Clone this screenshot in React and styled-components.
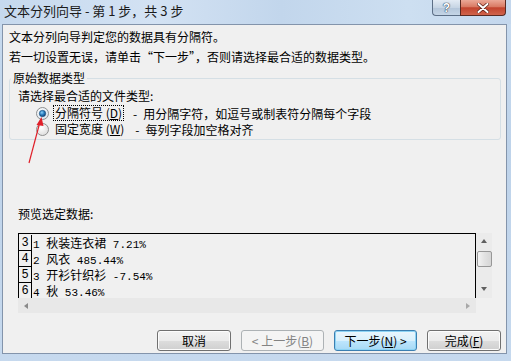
import React from 'react';
import styled, { createGlobalStyle } from 'styled-components';

const GlobalStyle = createGlobalStyle`
  html, body {
    margin: 0;
    padding: 0;
  }
  body {
    width: 511px;
    height: 361px;
    overflow: hidden;
    font-family: "Noto Sans CJK SC", "Liberation Sans", sans-serif;
    font-size: 12px;
    color: #000;
  }
`;

const rows = [
  { no: 3, idx: '1', name: '秋装连衣裙', pct: '7.21%' },
  { no: 4, idx: '2', name: '风衣', pct: '485.44%' },
  { no: 5, idx: '3', name: '开衫针织衫', pct: '-7.54%' },
  { no: 6, idx: '4', name: '秋', pct: '53.46%' },
];

const RadioIcon = ({ checked }) => (
  <svg width="13" height="13" viewBox="0 0 13 13">
    <defs>
      <radialGradient id={checked ? 'rgOn' : 'rgOff'} cx="0.4" cy="0.35" r="0.7">
        <stop offset="0" stopColor="#ffffff" />
        <stop offset="1" stopColor={checked ? '#d9e4ee' : '#dcdcdc'} />
      </radialGradient>
      <radialGradient id="dot" cx="0.4" cy="0.35" r="0.7">
        <stop offset="0" stopColor="#8fd0f7" />
        <stop offset="0.5" stopColor="#2a7fc0" />
        <stop offset="1" stopColor="#0b3c6e" />
      </radialGradient>
    </defs>
    <circle cx="6.5" cy="6.5" r="6" fill={`url(#${checked ? 'rgOn' : 'rgOff'})`} stroke="#8e8f8f" />
    {checked && <circle cx="6.5" cy="6.5" r="3.2" fill="url(#dot)" stroke="#1d4f7c" strokeWidth="0.6" />}
  </svg>
);

const App = () => (
  <>
    <GlobalStyle />
    <Window>
      <TitleBar>
        <Title>文本分列向导 - 第 1 步，共 3 步</Title>
        <Controls>
          <HelpBtn>?</HelpBtn>
          <CloseBtn>
            <svg width="12" height="10" viewBox="0 0 12 10">
              <path d="M1.5 1 L10.5 9 M10.5 1 L1.5 9" stroke="#5a1e16" strokeWidth="3.4" strokeLinecap="round" />
              <path d="M1.5 1 L10.5 9 M10.5 1 L1.5 9" stroke="#fff" strokeWidth="2" strokeLinecap="round" />
            </svg>
          </CloseBtn>
        </Controls>
      </TitleBar>

      <Client>
        <Intro>
          <p>文本分列向导判定您的数据具有分隔符。</p>
          <p>若一切设置无误，请单击“下一步”，否则请选择最合适的数据类型。</p>
        </Intro>

        <Group>
          <legend>原始数据类型</legend>
          <GroupBody>
            <Prompt>请选择最合适的文件类型:</Prompt>
            <RadioRow>
              <RadioIcon checked />
              <RadioLabel $focused>
                分隔符号 (<u>D</u>)
              </RadioLabel>
              <RadioDesc>
                <Dash>-</Dash>用分隔字符，如逗号或制表符分隔每个字段
              </RadioDesc>
            </RadioRow>
            <RadioRow>
              <RadioIcon />
              <RadioLabel>
                固定宽度 (<u>W</u>)
              </RadioLabel>
              <RadioDesc>
                <Dash>-</Dash>每列字段加空格对齐
              </RadioDesc>
            </RadioRow>
          </GroupBody>
        </Group>

        <PreviewLabel>预览选定数据:</PreviewLabel>
        <Preview>
          <Table>
            {rows.map((r) => (
              <Row key={r.no}>
                <NumCell>{r.no}</NumCell>
                <TextCell>
                  <Mono>{r.idx} </Mono>
                  {r.name}
                  <Mono> {r.pct}</Mono>
                </TextCell>
              </Row>
            ))}
          </Table>
          <VScroll>
            <Arrow $dir="up" />
            <Thumb />
            <Arrow $dir="down" />
          </VScroll>
          <HScroll>
            <Arrow $dir="left" />
            <Arrow $dir="right" />
          </HScroll>
          <Corner />
        </Preview>

        <Buttons>
          <Button $w={74}>取消</Button>
          <Button $w={83} disabled>
            &lt; 上一步(<u>B</u>)
          </Button>
          <Button $w={83} $primary>
            下一步(<u>N</u>) &gt;
          </Button>
          <Button $w={74}>
            完成(<u>F</u>)
          </Button>
        </Buttons>
      </Client>

      <Annotation width="20" height="50" viewBox="0 0 20 50">
        <path d="M2 47 L13.2 5" stroke="#e0202a" strokeWidth="1.2" />
        <path d="M14.5 1 L9.5 9 L16.5 10 Z" fill="#e0202a" />
      </Annotation>
    </Window>
  </>
);

export default App;

const Window = styled.div`
  position: relative;
  width: 511px;
  height: 361px;
  display: flex;
  flex-direction: column;
  background: linear-gradient(180deg, #c9dcf0 0%, #bed3ea 40%, #c6d9ee 100%);
`;

const TitleBar = styled.div`
  height: 24px;
  display: flex;
  justify-content: space-between;
  align-items: flex-start;
  padding-left: 4px;
  background: linear-gradient(90deg, #c6d9ee 0%, #d3e2f3 30%, #c2d6ec 55%, #cddff1 80%, #c4d7ed 100%);
`;

const Title = styled.div`
  font-size: 13px;
  line-height: 22px;
  color: #1b1b1b;
`;

const Controls = styled.div`
  display: flex;
  margin-right: 5px;
`;

const HelpBtn = styled.div`
  width: 27px;
  height: 15px;
  border: 1px solid #5d6f86;
  border-top: none;
  border-right: none;
  border-radius: 0 0 0 4px;
  background: linear-gradient(180deg, #e3ebf4 0%, #c7d5e4 50%, #b3c5d9 51%, #c5d5e6 100%);
  display: flex;
  align-items: center;
  justify-content: center;
  font-family: "Liberation Sans", sans-serif;
  font-weight: bold;
  font-size: 12px;
  color: #fff;
  text-shadow: 0 0 1px #33465c, 0 0 1px #33465c, 0 0 1px #33465c;
`;

const CloseBtn = styled.div`
  width: 44px;
  height: 15px;
  border: 1px solid #5a2a22;
  border-top: none;
  border-radius: 0 0 4px 0;
  background: linear-gradient(180deg, #eba897 0%, #d97a64 45%, #c2432e 52%, #d0644c 100%);
  display: flex;
  align-items: center;
  justify-content: center;
`;

const Client = styled.div`
  flex: 1;
  margin: 0 4px 7px 2px;
  border: 1px solid #8394ab;
  background: #f0f0f0;
  padding: 0 5px 0 6px;
  display: flex;
  flex-direction: column;
`;

const Intro = styled.div`
  padding-top: 2px;
  p {
    margin: 0;
    line-height: 20px;
  }
`;

const Group = styled.fieldset`
  margin: 3px 0 0;
  padding: 0 0 2px 1px;
  min-width: 0;
  border: 1px solid #d5dfe5;
  border-radius: 3px;
  legend {
    padding: 0 2px;
    line-height: 16px;
  }
`;

const GroupBody = styled.div`
  padding-left: 7px;
`;

const Prompt = styled.div`
  line-height: 19px;
`;

const RadioRow = styled.div`
  display: flex;
  align-items: center;
  height: 16px;
  padding-left: 18px;
  svg {
    flex: none;
  }
`;

const RadioLabel = styled.span`
  margin-left: 4px;
  padding: 0 1px;
  line-height: 14px;
  white-space: pre;
  border: 1px dotted ${(p) => (p.$focused ? '#000' : 'transparent')};
`;

const RadioDesc = styled.span`
  margin-left: 9px;
`;

const Dash = styled.span`
  margin-right: 6px;
`;

const PreviewLabel = styled.div`
  margin: 66px 0 0 9px;
  line-height: 16px;
`;

const Preview = styled.div`
  margin: 11px 0 0 9px;
  width: 474px;
  display: grid;
  grid-template-columns: 458px 16px;
  grid-template-rows: 65px 15px;
`;

const Table = styled.div`
  border: 1px solid #000;
  border-bottom: none;
  padding-top: 1px;
  overflow: hidden;
  background: #f0f0f0;
`;

const Row = styled.div`
  display: flex;
  height: 16px;
`;

const NumCell = styled.div`
  width: 12px;
  flex: none;
  border-right: 1px solid #000;
  border-bottom: 1px solid #000;
  font-family: "Liberation Mono", monospace;
  font-size: 12px;
  line-height: 17px;
  text-align: center;
`;

const TextCell = styled.div`
  padding-left: 1px;
  line-height: 16px;
  white-space: pre;
`;

const Mono = styled.span`
  font-family: "Liberation Mono", monospace;
  font-size: 11px;
`;

const VScroll = styled.div`
  background: #ebebeb;
  display: flex;
  flex-direction: column;
  align-items: center;
  padding-top: 6px;
`;

const Thumb = styled.div`
  width: 13px;
  height: 14px;
  margin: 8px 0 20px;
  border: 1px solid #979797;
  border-radius: 2px;
  background: linear-gradient(90deg, #f3f3f3, #e2e2e2 50%, #d6d6d6);
`;

const HScroll = styled.div`
  background: #e8e8e8;
  display: flex;
  align-items: center;
  justify-content: space-between;
  padding: 0 6px;
`;

const Corner = styled.div`
  background: #f0f0f0;
`;

const arrowShapes = {
  up: 'border-left: 3px solid transparent; border-right: 3px solid transparent; border-bottom: 4px solid #606060;',
  down: 'border-left: 3px solid transparent; border-right: 3px solid transparent; border-top: 4px solid #606060;',
  left: 'border-top: 3.5px solid transparent; border-bottom: 3.5px solid transparent; border-right: 4px solid #8a8a8a;',
  right: 'border-top: 3.5px solid transparent; border-bottom: 3.5px solid transparent; border-left: 4px solid #a8a8a8;',
};

const Arrow = styled.span`
  width: 0;
  height: 0;
  ${(p) => arrowShapes[p.$dir]}
`;

const Buttons = styled.div`
  margin-top: 17px;
  display: flex;
  justify-content: flex-end;
  gap: 10px;
`;

const Button = styled.button`
  width: ${(p) => p.$w}px;
  height: 21px;
  padding: 0;
  font-family: inherit;
  font-size: 12px;
  color: #000;
  border-radius: 3px;
  border: 1px solid ${(p) => (p.$primary ? '#3c7fb1' : '#707070')};
  background: ${(p) =>
    p.$primary
      ? 'linear-gradient(180deg, #eaf6fd 0%, #d9f0fc 50%, #bee6fd 51%, #a7d9f5 100%)'
      : 'linear-gradient(180deg, #f2f2f2 0%, #ebebeb 50%, #dddddd 51%, #cfcfcf 100%)'};
  box-shadow: inset 0 0 0 1px ${(p) => (p.$primary ? '#8ed4f5' : '#fcfcfc')};
  &:disabled {
    border-color: #adb2b5;
    background: #f4f4f4;
    box-shadow: none;
    color: #838383;
  }
`;

const Annotation = styled.svg`
  position: absolute;
  left: 27px;
  top: 116px;
`;
